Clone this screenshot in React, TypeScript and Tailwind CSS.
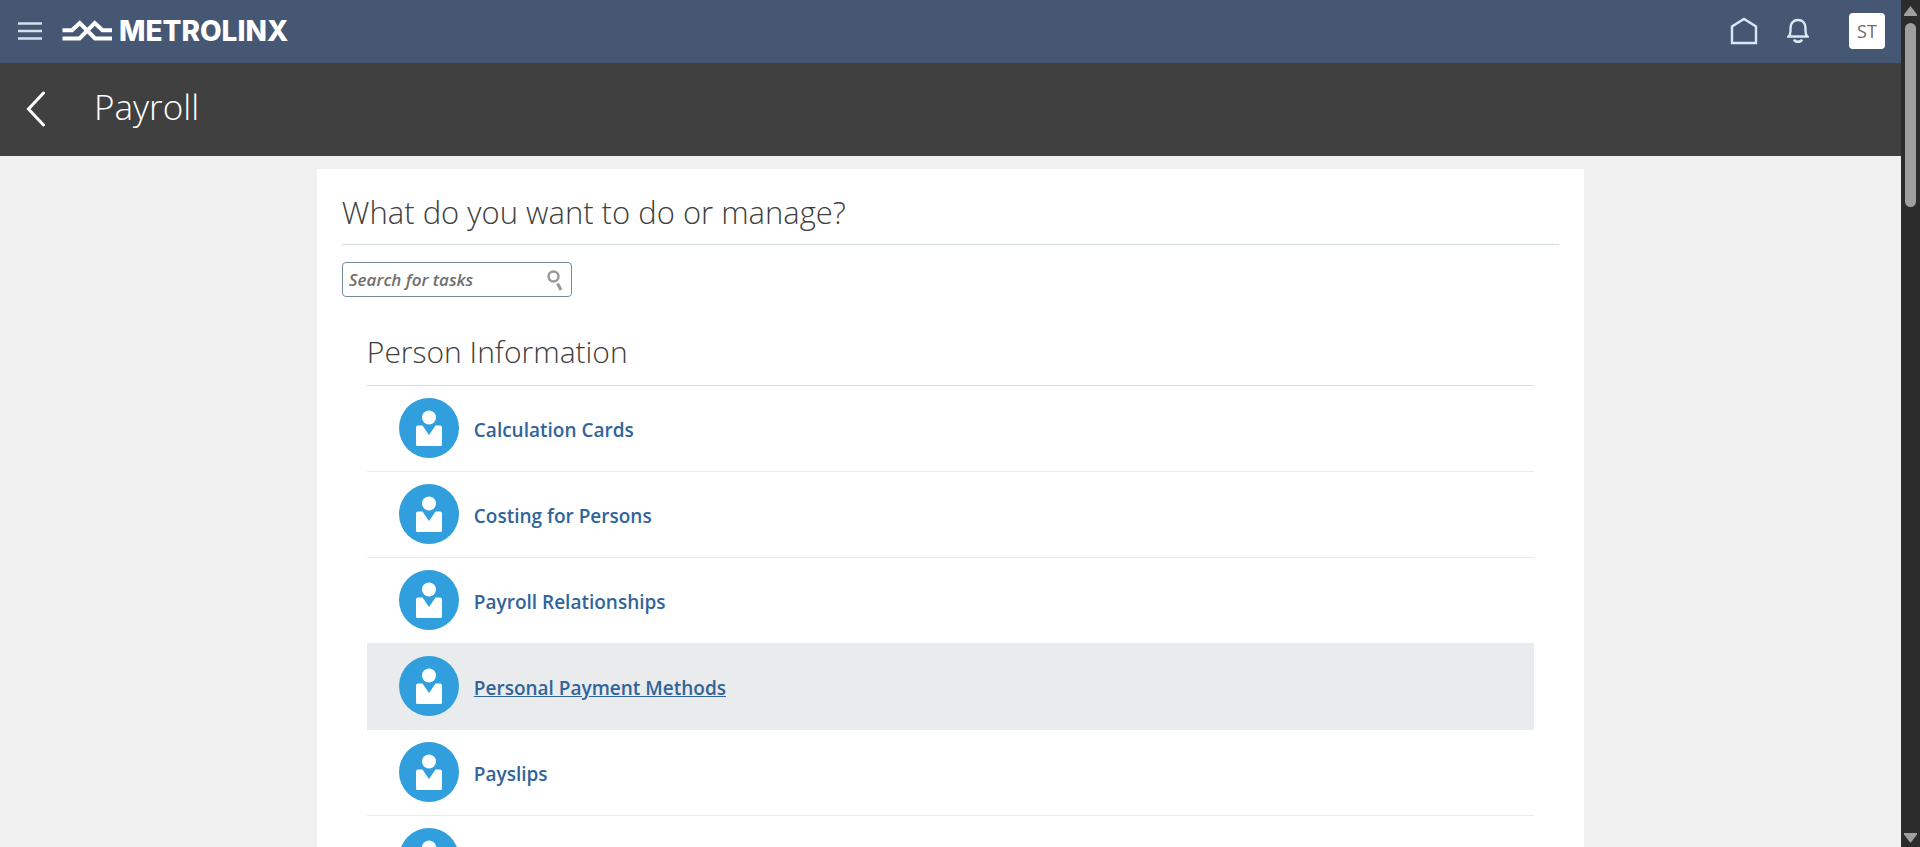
import React from "react";

const tasks = [
  { name: "Calculation Cards" },
  { name: "Costing for Persons" },
  { name: "Payroll Relationships" },
  { name: "Personal Payment Methods", active: true },
  { name: "Payslips" },
  { name: "" },
];

function PersonIcon() {
  return (
    <svg viewBox="0 0 60 60" className="size-[60px] shrink-0" aria-hidden="true">
      <circle cx="30" cy="30" r="30" fill="#319fdd" />
      <circle cx="30" cy="19.500" r="7" fill="#fff" />
      <path d="M19 27.500h4.500l6.500 9.500 6.500-9.500h4.500q2 0 2 2v17q0 1.500-1.500 1.500h-23q-1.500 0-1.500-1.500v-17q0-2 2-2z" fill="#fff" />
    </svg>
  );
}

function TopBar() {
  return (
    <header className="flex h-[63px] shrink-0 items-center bg-[#465773] pr-4 pb-px pl-[18px]">
      <button type="button" aria-label="Menu" className="mr-5">
        <svg width="24" height="18" viewBox="0 0 24 18" stroke="#d6dfec" strokeWidth="2.400" aria-hidden="true">
          <path d="M0 1.500h24M0 9h24M0 16.500h24" />
        </svg>
      </button>
      <a href="#home" className="flex items-center gap-1.5 text-white">
        <svg width="51" height="22" viewBox="0 0 51 22" fill="none" stroke="#fff" strokeWidth="4" aria-hidden="true">
          <path d="M0.500 10.300h9.500L17.800 3 33 18.500h17" />
          <path d="M50 10.300h-9.500L32.700 3 17.500 18.500H0.500" />
        </svg>
        <span className="font-[Inter,sans-serif] text-[28px] leading-8 font-extrabold">METROLINX</span>
      </a>
      <div className="ml-auto flex items-center">
        <button type="button" aria-label="Home" className="mr-[29px]">
          <svg width="28" height="28" viewBox="0 0 28 28" fill="none" stroke="#dbe5f3" strokeWidth="2.400" aria-hidden="true">
            <path d="M2 26V9.500L14 2l12 7.500V26z" />
          </svg>
        </button>
        <button type="button" aria-label="Notifications" className="mr-10">
          <svg width="22" height="26" viewBox="0 0 22 26" fill="none" stroke="#dbe5f3" strokeWidth="2.400" aria-hidden="true">
            <path d="M1.500 18.500c1.500-1.500 2-3 2-5.500V10c0-5 3-8 7.500-8s7.500 3 7.500 8v3c0 2.500.5 4 2 5.500z" />
            <path d="M7 21.500c1 3 7 3 8 0" />
          </svg>
        </button>
        <button type="button" className="size-9 rounded bg-white font-['Open_Sans',sans-serif] text-lg leading-6 text-[#6b6b6b]">ST</button>
      </div>
    </header>
  );
}

function TaskRow({ name, active }: { name: string; active?: boolean }) {
  return (
    <li className={active ? "border-b border-[#e9ebec] bg-[#e9ebec]" : "border-b border-[#e9ebec]"}>
      <a href="#task" className="flex h-[85px] items-start gap-[15px] pt-3 pl-8 text-[#30649a]">
        <PersonIcon />
        <span className={active ? "pt-5 text-[19px] leading-6 font-semibold underline" : "pt-5 text-[19px] leading-6 font-semibold"}>{name}</span>
      </a>
    </li>
  );
}

function ScrollTrack() {
  return (
    <div className="flex w-[19px] shrink-0 flex-col items-center bg-[#2c2c2c] pt-1.5 pb-1" aria-hidden="true">
      <svg width="13" height="10" viewBox="0 0 13 10" fill="#9f9f9f"><path d="M6.500 0 13 8.500V10H0V8.500z" /></svg>
      <div className="mt-[7px] h-[184px] w-[11px] rounded-full bg-[#9f9f9f]" />
      <svg className="mt-auto" width="13" height="10" viewBox="0 0 13 10" fill="#9f9f9f"><path d="M6.500 10 13 1.500V0H0V1.500z" /></svg>
    </div>
  );
}

export default function App() {
  return (
    <div className="flex h-screen overflow-hidden bg-[#f0f0f0] font-['Open_Sans',sans-serif]">
      <div className="flex min-w-0 flex-1 flex-col">
        <TopBar />
        <div className="flex h-[93px] shrink-0 items-center bg-[#404040] pb-[2px] pl-[26px] text-white">
          <button type="button" aria-label="Back" className="mr-12">
            <svg width="20" height="36" viewBox="0 0 20 36" fill="none" stroke="#fff" strokeWidth="3" strokeLinecap="round" aria-hidden="true">
              <path d="M17.500 2 2.500 18l15 16" />
            </svg>
          </button>
          <h1 className="pb-1 text-[35px] leading-[48px] font-light">Payroll</h1>
        </div>
        <main className="min-h-0 flex-1 overflow-hidden pt-[13px]">
          <section className="mx-auto w-2/3 bg-white px-[25px] pt-5">
            <h2 className="border-b border-[#d5dce3] pb-2 text-[31px] leading-[47px] font-light text-[#404040]">What do you want to do or manage?</h2>
            <div className="mt-[17px] flex h-[35px] w-[230px] items-center rounded-sm border border-[#778b98] pr-2 pl-1.5">
              <input type="text" aria-label="Search for tasks" placeholder="Search for tasks" className="min-w-0 flex-1 text-[17px] leading-6 font-semibold italic outline-none placeholder:text-[#707070]" />
              <button type="button" aria-label="Search">
                <svg width="16" height="22" viewBox="0 0 16 22" fill="none" stroke="#9a9a9a" aria-hidden="true">
                  <circle cx="6.500" cy="7.500" r="5" strokeWidth="2.500" />
                  <path d="m10.500 14.500 3.500 6.500" strokeWidth="3" />
                </svg>
              </button>
            </div>
            <div className="px-[25px] pt-[31px]">
              <h3 className="border-b border-[#d5dce3] pb-[9px] text-[30px] leading-[48px] font-light text-[#404040]">Person Information</h3>
              <ul>{tasks.map((task) => <TaskRow key={task.name} {...task} />)}</ul>
            </div>
          </section>
        </main>
      </div>
      <ScrollTrack />
    </div>
  );
}
